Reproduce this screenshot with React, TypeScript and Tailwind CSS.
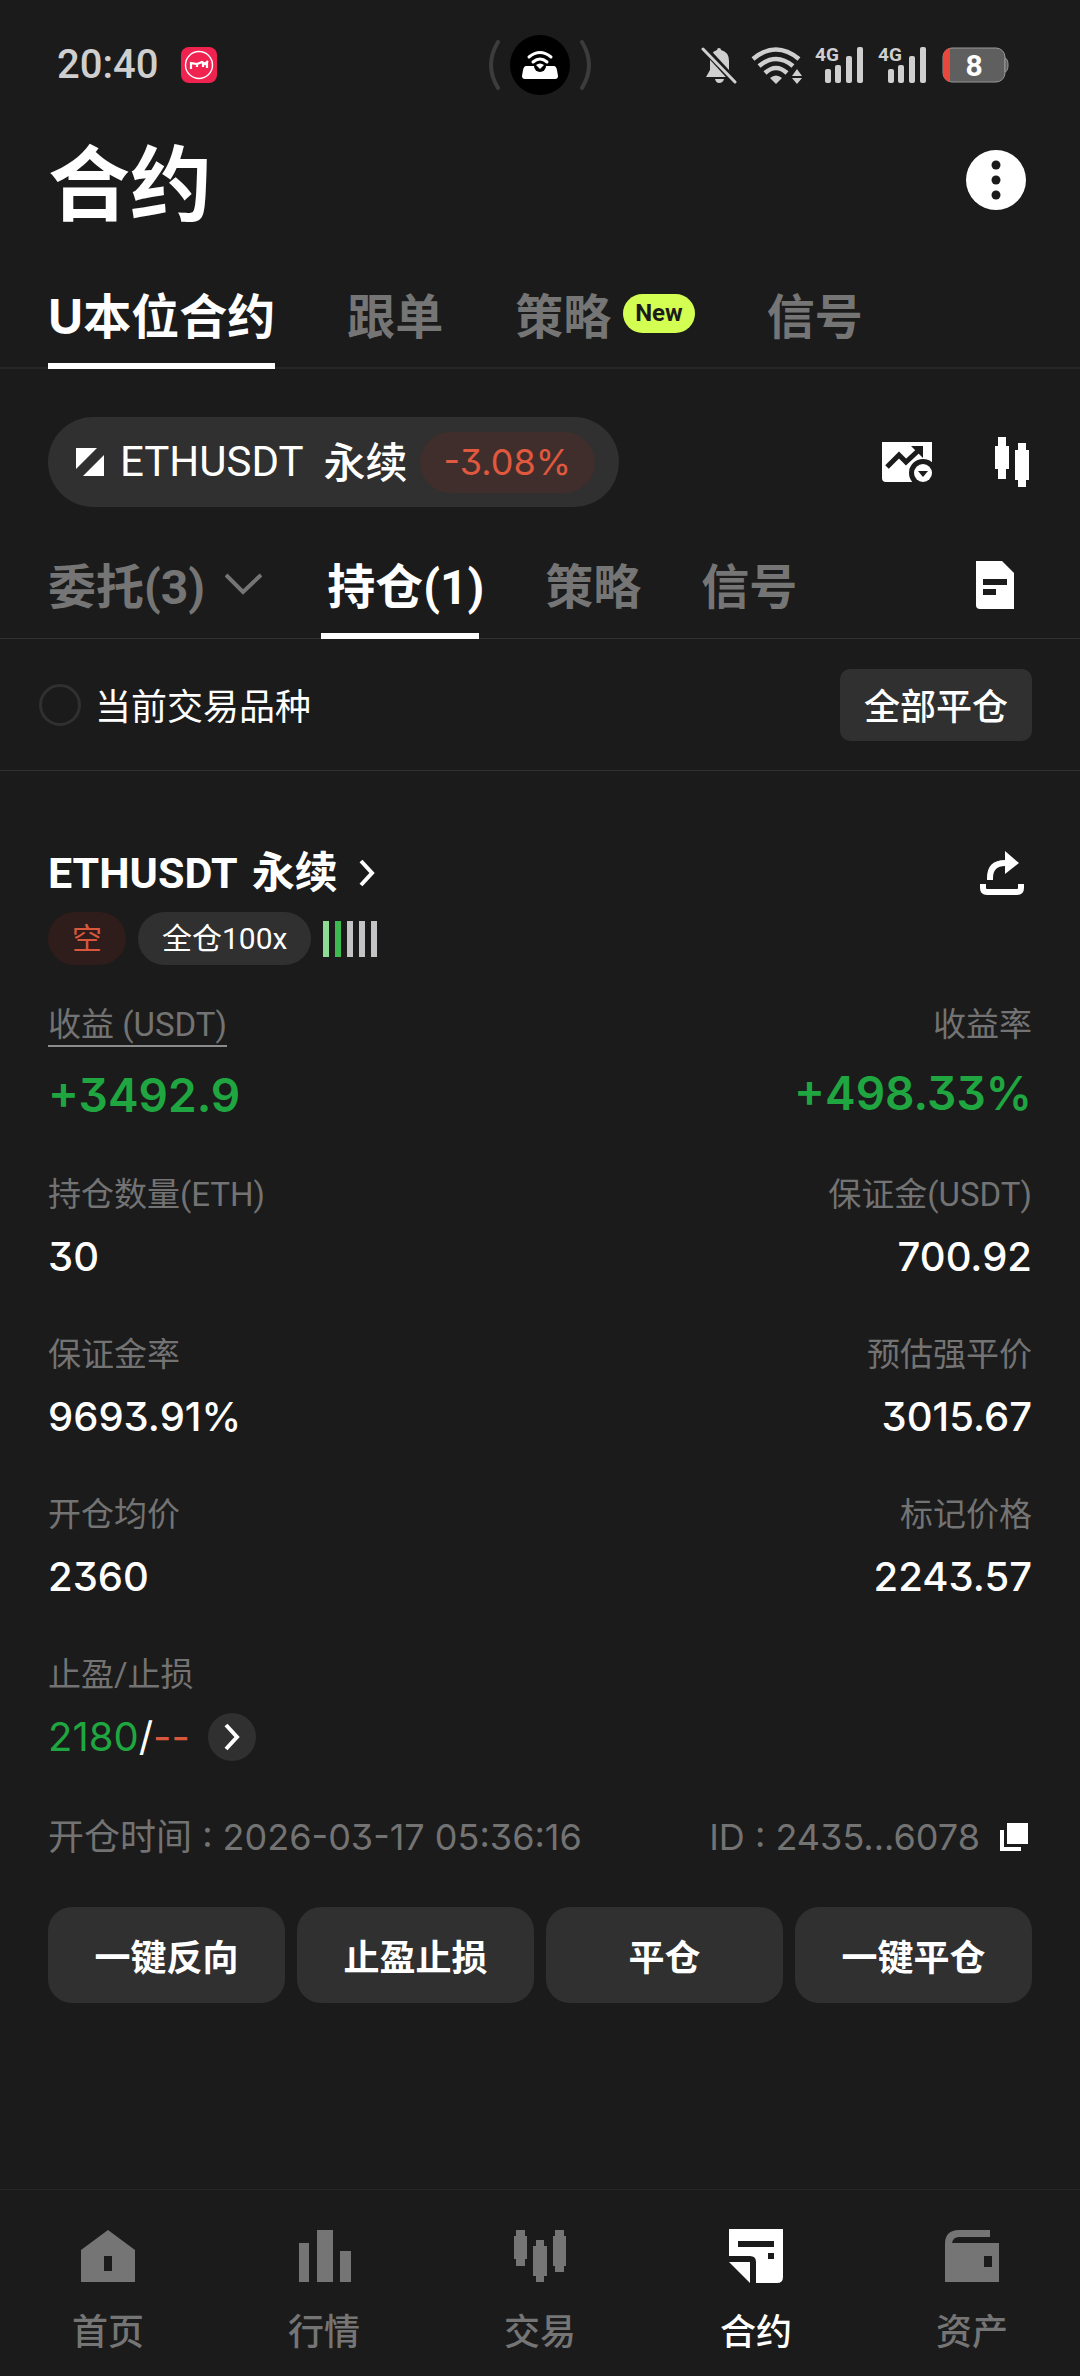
import type { ReactNode } from "react";

const NUM = "font-['Inter','Noto_Sans_CJK_SC',sans-serif] [font-feature-settings:'cv09']";

function Signal() {
  return (
    <svg width="48" height="46" viewBox="0 -4 48 46" fill="#cfcfcf">
      <text x="0" y="15" fontSize="19" fontWeight="700" fontFamily="Roboto">4G</text>
      <rect x="10" y="23" width="6" height="14" rx="2" />
      <rect x="20" y="19" width="6" height="18" rx="2" />
      <rect x="31" y="10" width="6" height="27" rx="2" />
      <rect x="42" y="1" width="6" height="36" rx="2" />
    </svg>
  );
}

function StatusBar() {
  return (
    <div className="grid grid-cols-3 items-center h-[130px] pl-[57px] pr-[71px]">
      <div className="flex items-center gap-[23px]">
        <span className="text-[40px] leading-[48px] font-medium text-[#cfcfcf]">20:40</span>
        <svg width="36" height="36" viewBox="0 0 36 36">
          <rect width="36" height="36" rx="8" fill="#f0224f" />
          <circle cx="18" cy="18" r="13.5" fill="none" stroke="#fff" strokeWidth="1.4" />
          <path d="M10 22V16L16 17L21 15L24 17L27 14M16 17V20M22 16V20M26 15V21" fill="none" stroke="#fff" strokeWidth="2.2" />
        </svg>
      </div>

      {/* Camera cutout with hotspot indicator */}
      <svg className="justify-self-center ml-[14px]" width="104" height="60" viewBox="0 0 104 60" fill="none">
        <path d="M10 7Q-4 30 10 53M94 7Q108 30 94 53" stroke="#3c3c3c" strokeWidth="4" strokeLinecap="round" />
        <circle cx="52" cy="30" r="30" fill="#000" />
        <path d="M38 31H66Q68 31 69 35L70 41Q70 44 67 44H37Q34 44 34 41L35 35Q36 31 38 31Z" fill="#fff" />
        <circle cx="52" cy="31" r="6" fill="#000" />
        <path d="M41 22Q52 13 63 22M45 27Q52 21 59 27" stroke="#fff" strokeWidth="3" strokeLinecap="round" />
        <path d="M48 30Q52 27 56 30L52 34Z" fill="#fff" />
      </svg>

      <div className="flex items-center justify-self-end">
        <svg width="36" height="38" viewBox="0 0 36 38" fill="#cfcfcf">
          <path d="M18 2Q20 2 20 4Q28 6 28 15V24L32 31H5L9 24V15Q9 6 16 4Q16 2 18 2Z" />
          <path d="M14 33H23Q22 37 18 37Q15 37 14 33Z" />
          <path d="M1 0L36 38" stroke="#1b1b1b" strokeWidth="7" />
          <path d="M2 3L34 36" stroke="#cfcfcf" strokeWidth="3" strokeLinecap="round" />
        </svg>
        <svg className="ml-[14px]" width="52" height="38" viewBox="0 0 52 38" fill="none" stroke="#cfcfcf" strokeWidth="4.5">
          <path d="M2 13Q25 -6 48 13M8 20Q25 6 42 20M14 27Q25 17 36 27" />
          <path d="M19 32Q25 27 31 32L25 38Z" fill="#cfcfcf" stroke="none" />
          <path d="M41 30L46 23L51 30ZM41 32H51L46 38Z" fill="#cfcfcf" stroke="none" />
        </svg>
        <span className="ml-3"><Signal /></span>
        <span className="ml-[15px]"><Signal /></span>
        <svg className="ml-4" width="67" height="36" viewBox="0 0 67 36">
          <rect x="1" y="1" width="62" height="34" rx="9" fill="#5f5f5f" stroke="#9a9a9a" />
          <path d="M7 1H8V35H7Q1 32 1 26V10Q1 4 7 1Z" fill="#e8483c" />
          <path d="M63 11Q66 12 66 18Q66 24 63 25Z" fill="#5f5f5f" stroke="#9a9a9a" />
          <text x="32" y="29" textAnchor="middle" fontSize="30" fontWeight="700" fontFamily="Roboto" fill="#fff">8</text>
        </svg>
      </div>
    </div>
  );
}

type TabProps = { active?: boolean; className?: string; children: ReactNode };

function Tab({ active, className = "", children }: TabProps) {
  return (
    <button
      className={`flex items-center text-5xl leading-[82px] font-bold whitespace-nowrap border-b-[6px] ${
        active ? "text-white border-white" : "text-[#757575] border-transparent"
      } ${className}`}
    >
      {children}
    </button>
  );
}

function ChevronRight() {
  return (
    <svg width="18" height="28" viewBox="0 0 18 28" fill="none" stroke="#fff" strokeWidth="4">
      <path d="M3 2L14 14L3 26" />
    </svg>
  );
}

function Stat({ label, value, right }: { label: string; value: string; right?: boolean }) {
  return (
    <div className={right ? "text-right" : ""}>
      <dt className="text-[33px] leading-10 text-[#737373]">{label}</dt>
      <dd className={`mt-3 text-[40px] leading-[60px] font-medium text-white ${NUM}`}>{value}</dd>
    </div>
  );
}

const stats = [
  ["持仓数量(ETH)", "30"],
  ["保证金(USDT)", "700.92"],
  ["保证金率", "9693.91%"],
  ["预估强平价", "3015.67"],
  ["开仓均价", "2360"],
  ["标记价格", "2243.57"],
];

const strengthBars = ["bg-[#8edb96]", "bg-[#3cba50]", "bg-[#c4c4c6]", "bg-[#c4c4c6]", "bg-[#c4c4c6]"];

const navItems = [
  {
    label: "首页",
    icon: <path fillRule="evenodd" d="M27 1L54 21V53H0V21ZM23 27V42H31V27Z" />,
  },
  {
    label: "行情",
    icon: <path d="M2 14H12V53H2ZM20 1H36V53H20ZM43 22H54V53H43Z" />,
  },
  {
    label: "交易",
    icon: (
      <path d="M3 1H12V7H14V30H12V37H3V30H1V7H3ZM23 11H31V17H34V47H31V53H23V47H20V17H23ZM42 1H51V7H53V37H51V43H42V37H40V7H42Z" />
    ),
  },
  {
    label: "合约",
    active: true,
    icon: (
      <>
        <path
          fillRule="evenodd"
          d="M0 0H54V48Q54 54 48 54H27V33Q27 27 21 27H0ZM9 12V18H45V12ZM39 24V30H45V24Z"
        />
        <path d="M0 33H21V54Z" />
      </>
    ),
  },
  {
    label: "资产",
    icon: (
      <path fillRule="evenodd" d="M0 53V15Q0 1 14 1H45V8H14Q8 8 7 14H54V53ZM39 27V38H47V27Z" />
    ),
  },
];

export default function App() {
  return (
    <div className="min-h-screen flex flex-col bg-[#1b1b1b] text-white font-['Roboto','Noto_Sans_CJK_SC',sans-serif]">
      <StatusBar />

      {/* Page title */}
      <header className="flex items-center justify-between pl-12 pr-[54px] h-[100px]">
        <h1 className="pt-3 text-[82px] leading-[100px] font-bold">合约</h1>
        <button aria-label="更多">
          <svg width="60" height="60" viewBox="0 0 60 60">
            <circle cx="30" cy="30" r="30" fill="#fff" />
            <g fill="#1b1b1b">
              <circle cx="30" cy="15" r="4.5" />
              <circle cx="30" cy="30" r="4.5" />
              <circle cx="30" cy="45" r="4.5" />
            </g>
          </svg>
        </button>
      </header>

      {/* Product tabs */}
      <nav className={`flex gap-[72px] mt-[46px] px-12 border-b-2 border-[#272727] ${NUM}`}>
        <Tab active className="pb-[5px] -mb-[2px]">U本位合约</Tab>
        <Tab className="pb-[5px] -mb-[2px]">跟单</Tab>
        <Tab className="pb-[5px] -mb-[2px]">
          策略
          <span className="ml-3 mb-2 px-3 rounded-full bg-[#d2ff52] text-[#1b1b1b] text-2xl leading-[39px] font-bold font-['Roboto']">
            New
          </span>
        </Tab>
        <Tab className="pb-[5px] -mb-[2px]">信号</Tab>
      </nav>

      {/* Symbol selector */}
      <div className="flex items-center justify-between mt-12 pl-12 pr-[51px]">
        <button className="flex items-center h-[90px] pl-7 pr-6 rounded-full bg-[#303030] text-[42px] leading-[60px]">
          <svg width="28" height="28" viewBox="0 0 28 28" fill="#fff">
            <path d="M0 0H21L0 21ZM28 7V28H7Z" />
          </svg>
          <span className="ml-4">ETHUSDT</span>
          <span className="ml-5 pt-1 font-medium">永续</span>
          <span className={`ml-3 px-6 rounded-full bg-[#3f2e2b] text-[#e0583e] text-[36px] leading-[61px] ${NUM}`}>
            -3.08%
          </span>
        </button>
        <div className="flex items-center gap-[63px]">
          <button aria-label="行情图">
            <svg width="50" height="40" viewBox="0 0 50 40">
              <path d="M0 0H50V40H4Q0 40 0 36Z" fill="#fff" />
              <path d="M5 25L17 13L24 20L37 8" fill="none" stroke="#1b1b1b" strokeWidth="5" />
              <path d="M29 4H41V16Z" fill="#1b1b1b" />
              <circle cx="41" cy="31" r="14" fill="#1b1b1b" />
              <circle cx="41" cy="31" r="9" fill="#fff" />
              <path d="M36 29H46L41 35Z" fill="#1b1b1b" />
            </svg>
          </button>
          <button aria-label="K线">
            <svg width="34" height="50" viewBox="0 0 34 50" fill="#fff">
              <path d="M3 0H11V9H14V32H11V42H3V32H0V9H3ZM23 6H31V13H34V43H31V50H23V43H20V13H23Z" />
            </svg>
          </button>
        </div>
      </div>

      {/* Order / position tabs */}
      <nav className="flex mt-10 pl-12 pr-[66px] border-b border-[#303030]">
        <Tab className="pb-1 -mb-px">
          委托(3)
          <svg className="ml-5 mb-2" width="37" height="22" viewBox="0 0 37 22" fill="none" stroke="#757575" strokeWidth="4">
            <path d="M1 2L18 19L36 2" />
          </svg>
        </Tab>
        <Tab active className="w-[158px] ml-[59px] pl-[6px] pb-1 -mb-px">持仓(1)</Tab>
        <Tab className="ml-[66px] pb-1 -mb-px">策略</Tab>
        <Tab className="ml-[60px] pb-1 -mb-px">信号</Tab>
        <button className="ml-auto mb-4" aria-label="委托记录">
          <svg width="38" height="48" viewBox="0 0 38 48">
            <path d="M0 0H26L38 12V48H4Q0 48 0 44Z" fill="#fff" />
            <path d="M7 18H31V24H7ZM7 28H20V34H7Z" fill="#1b1b1b" />
          </svg>
        </button>
      </nav>

      <div className="flex items-center justify-between h-[132px] pl-[39px] pr-12 border-b border-[#303030]">
        <label className="flex items-center gap-[14px] text-[36px] leading-[48px]">
          <input type="checkbox" className="appearance-none size-[42px] rounded-full border-[3px] border-[#303030]" />
          <span className="pt-[6px]">当前交易品种</span>
        </label>
        <button className="h-[72px] px-6 pt-[6px] rounded-[10px] bg-[#303030] text-[36px] leading-[48px] font-medium">
          全部平仓
        </button>
      </div>

      <main className="px-12 pt-[72px]">
        <div className="flex items-center justify-between h-[60px] pr-2">
          <a href="#" className="flex items-center text-[43px] leading-[60px] font-bold">
            <span>ETHUSDT</span>
            <span className="ml-[14px] mr-5">永续</span>
            <ChevronRight />
          </a>
          <button aria-label="分享">
            <svg width="44" height="44" viewBox="0 0 44 44">
              <path d="M10 29V27Q10 12 25 12H28" fill="none" stroke="#fff" strokeWidth="6" />
              <path d="M25 0L39 12L25 23Z" fill="#fff" />
              <path d="M3 33V37Q3 41 7 41H37Q41 41 41 37V33" fill="none" stroke="#fff" strokeWidth="6" />
            </svg>
          </button>
        </div>

        <div className="flex items-center mt-[9px] text-[30px] leading-[53px]">
          <span className="px-6 rounded-full bg-[#2e1d1a] text-[#d9573d]">空</span>
          <span className="ml-3 px-6 rounded-full bg-[#303030]">全仓100x</span>
          <div className="flex gap-[6px] ml-3">
            {strengthBars.map((color, i) => (
              <span key={i} className={`w-[6px] h-9 ${color}`} />
            ))}
          </div>
        </div>

        <dl className="flex justify-between mt-10">
          <div>
            <dt className="w-fit text-[33px] leading-10 text-[#737373] border-b-2 border-[#8c8c8c]">收益 (USDT)</dt>
            <dd className={`mt-[18px] text-[46px] leading-[60px] font-semibold text-[#1fa640] ${NUM}`}>+3492.9</dd>
          </div>
          <div className="text-right">
            <dt className="text-[33px] leading-10 text-[#737373]">收益率</dt>
            <dd className={`mt-[18px] text-[46px] leading-[60px] font-semibold text-[#1fa640] ${NUM}`}>+498.33%</dd>
          </div>
        </dl>

        <dl className="grid grid-cols-2 gap-y-12 mt-[50px]">
          {stats.map(([label, value], i) => (
            <Stat key={label} label={label} value={value} right={i % 2 === 1} />
          ))}
          <div>
            <dt className="text-[33px] leading-10 text-[#737373]">止盈/止损</dt>
            <dd className={`flex items-center mt-3 text-[40px] leading-[60px] ${NUM}`}>
              <span className="text-[#1fa640]">2180</span>
              <span>/</span>
              <span className="text-[#d9573d]">--</span>
              <button aria-label="编辑止盈止损" className="flex items-center justify-center ml-[18px] size-12 rounded-full bg-[#303030]">
                <ChevronRight />
              </button>
            </dd>
          </div>
        </dl>

        <div className={`flex justify-between mt-[50px] text-[36px] leading-10 text-[#737373] ${NUM}`}>
          <span>开仓时间 : 2026-03-17 05:36:16</span>
          <span className="flex items-center gap-5 pr-1">
            ID : 2435...6078
            <button aria-label="复制">
              <svg width="28" height="28" viewBox="0 0 28 28" fill="#fff">
                <path d="M7 0H28V21H7ZM0 7H4V24H21V28H0Z" />
              </svg>
            </button>
          </span>
        </div>

        <div className="grid grid-cols-4 gap-3 mt-[50px]">
          {["一键反向", "止盈止损", "平仓", "一键平仓"].map((text) => (
            <button key={text} className="h-24 pt-2 rounded-3xl bg-[#303030] text-[36px] leading-[48px] font-bold">
              {text}
            </button>
          ))}
        </div>
      </main>

      {/* Bottom navigation */}
      <footer className="grid grid-cols-5 mt-auto h-[187px] pt-[39px] border-t border-[#272727]">
        {navItems.map(({ label, icon, active }) => (
          <a
            key={label}
            href="#"
            className={`flex flex-col items-center gap-[26px] text-[36px] leading-[48px] font-medium ${active ? "text-white" : "text-[#757575]"}`}
          >
            <svg width="54" height="54" viewBox="0 0 54 54" fill="currentColor">
              {icon}
            </svg>
            {label}
          </a>
        ))}
      </footer>
    </div>
  );
}
